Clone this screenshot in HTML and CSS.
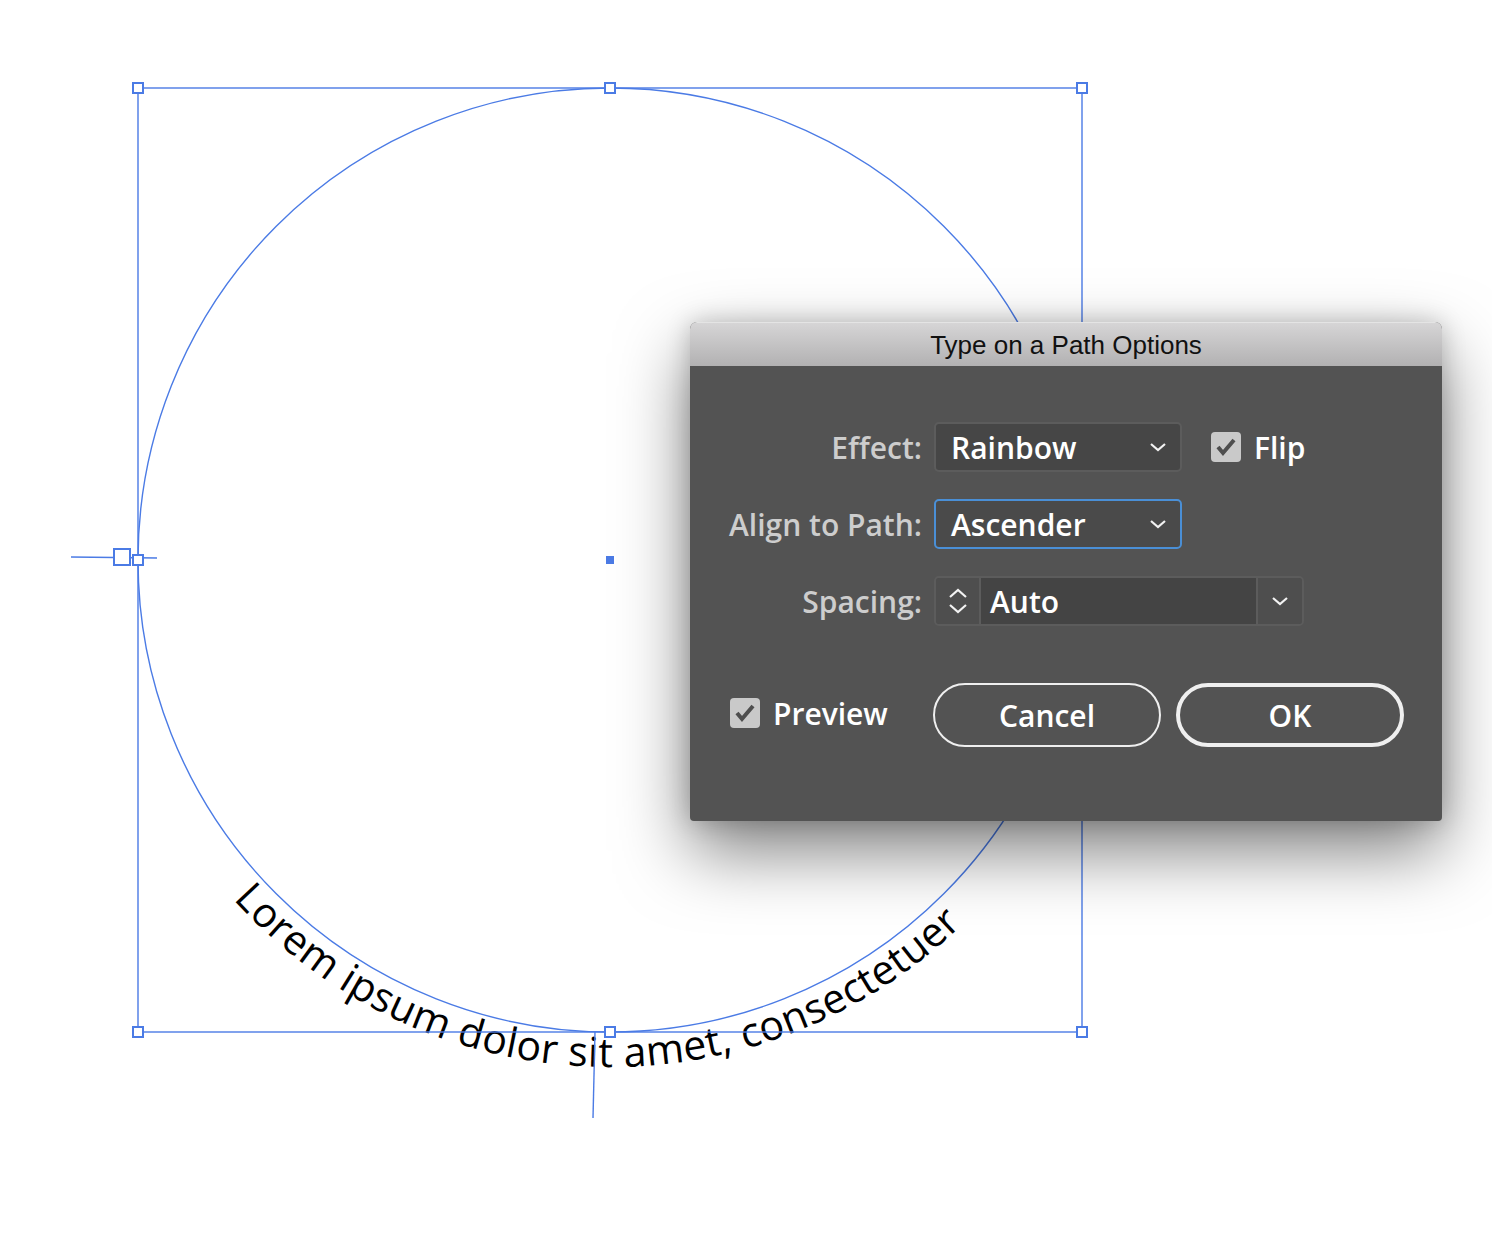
FILE: index.html
```html
<!DOCTYPE html>
<html lang="en">
<head>
    <meta charset="UTF-8">
    <title>Type on a Path Options</title>
    <link rel="stylesheet" href="styles.css">
</head>
<body>
    <div class="artboard">
        <svg class="art" width="1492" height="1252" viewBox="0 0 1492 1252">
            <defs>
                <path id="textArc" d="M 233.2 899.2 A 507 507 0 0 0 962.2 924.7"/>
            </defs>
            <text class="path-text"><textPath href="#textArc" textLength="814" lengthAdjust="spacing">Lorem ipsum dolor sit amet, consectetuer</textPath></text>
            <g class="guides">
                <rect x="138" y="88" width="944" height="944"/>
                <circle cx="610" cy="560" r="472"/>
                <line x1="71" y1="557" x2="157" y2="558"/>
                <line x1="595" y1="1032" x2="593" y2="1118"/>
            </g>
            <g class="handles">
                <rect x="133" y="83" width="10" height="10"/>
                <rect x="605" y="83" width="10" height="10"/>
                <rect x="1077" y="83" width="10" height="10"/>
                <rect x="133" y="1027" width="10" height="10"/>
                <rect x="605" y="1027" width="10" height="10"/>
                <rect x="1077" y="1027" width="10" height="10"/>
                <rect x="133" y="555" width="10" height="10"/>
                <rect x="1077" y="555" width="10" height="10"/>
                <rect x="114" y="549" width="16" height="16"/>
            </g>
            <rect class="center-point" x="606" y="556" width="8" height="8"/>
        </svg>

        <div class="dialog">
            <div class="dialog-title">Type on a Path Options</div>
            <div class="dialog-body">
                <div class="form">
                    <label class="field-label">Effect:</label>
                    <div class="field-row">
                        <div class="select">
                            <span>Rainbow</span>
                            <svg class="chevron" width="18" height="10" viewBox="0 0 18 10"><polyline points="2,2 9,8 16,2"/></svg>
                        </div>
                        <div class="check-item flip">
                            <span class="checkbox"><svg width="30" height="30" viewBox="0 0 30 30"><polyline points="7,15 12,21 23,8"/></svg></span>
                            <span>Flip</span>
                        </div>
                    </div>

                    <label class="field-label">Align to Path:</label>
                    <div class="field-row">
                        <div class="select focused">
                            <span>Ascender</span>
                            <svg class="chevron" width="18" height="10" viewBox="0 0 18 10"><polyline points="2,2 9,8 16,2"/></svg>
                        </div>
                    </div>

                    <label class="field-label">Spacing:</label>
                    <div class="field-row">
                        <div class="combo">
                            <div class="stepper">
                                <svg width="20" height="11" viewBox="0 0 20 11"><polyline points="2,9 10,2 18,9"/></svg>
                                <svg width="20" height="11" viewBox="0 0 20 11"><polyline points="2,2 10,9 18,2"/></svg>
                            </div>
                            <div class="combo-value">Auto</div>
                            <div class="combo-arrow">
                                <svg class="chevron" width="18" height="10" viewBox="0 0 18 10"><polyline points="2,2 9,8 16,2"/></svg>
                            </div>
                        </div>
                    </div>
                </div>

                <div class="footer">
                    <div class="check-item preview">
                        <span class="checkbox"><svg width="30" height="30" viewBox="0 0 30 30"><polyline points="7,15 12,21 23,8"/></svg></span>
                        <span>Preview</span>
                    </div>
                    <div class="buttons">
                        <button class="btn">Cancel</button>
                        <button class="btn default">OK</button>
                    </div>
                </div>
            </div>
        </div>
    </div>
</body>
</html>
```

FILE: styles.css
```css
body {
    margin: 0;
    background: #fff;
    font-family: 'Open Sans', 'Noto Sans', sans-serif;
}
.artboard {
    position: relative;
    width: 1492px;
    height: 1252px;
    overflow: hidden;
}
.art {
    display: block;
}
.guides {
    fill: none;
    stroke: #4b7be5;
    stroke-width: 1.4;
}
.handles rect {
    fill: #fff;
    stroke: #4b7be5;
    stroke-width: 2;
}
.center-point {
    fill: #4b7be5;
}
.path-text {
    font-family: 'Open Sans', 'Noto Sans', sans-serif;
    font-size: 41px;
    fill: #000;
}

/* dialog */
.dialog {
    position: absolute;
    left: 690px;
    top: 322px;
    width: 752px;
    background: #535353;
    border-radius: 7px 7px 4px 4px;
    box-shadow: 0 30px 70px rgba(0, 0, 0, 0.5), 0 0 24px rgba(0, 0, 0, 0.2);
    overflow: hidden;
}
.dialog-title {
    height: 44px;
    line-height: 45px;
    text-align: center;
    font-family: 'Liberation Sans', Arial, sans-serif;
    font-size: 26px;
    color: #111;
    background: linear-gradient(#d6d5d6, #b2b1b2);
    border-top: 1px solid #e4e4e4;
    box-sizing: border-box;
}
.dialog-body {
    padding: 56px 0 74px;
}
.form {
    display: grid;
    grid-template-columns: 232px 1fr;
    column-gap: 12px;
    row-gap: 27px;
    grid-auto-rows: 50px;
}
.field-label {
    display: flex;
    align-items: center;
    justify-content: flex-end;
    font-size: 30px;
    font-weight: 600;
    color: #cdcdcd;
}
.field-row {
    display: flex;
    align-items: center;
}
.select {
    width: 248px;
    height: 50px;
    box-sizing: border-box;
    display: flex;
    align-items: center;
    justify-content: space-between;
    padding: 0 13px 0 15px;
    background: #464646;
    border: 2px solid #5c5c5c;
    border-radius: 5px;
    font-size: 30px;
    font-weight: 600;
    color: #fff;
}
.select.focused {
    border-color: #4a8fd6;
    background: #4a4a4a;
}
.chevron polyline,
.stepper polyline {
    fill: none;
    stroke: #f2f2f2;
    stroke-width: 2.2;
}
.check-item {
    display: flex;
    align-items: center;
    gap: 13px;
    font-size: 30px;
    font-weight: 600;
    color: #fff;
}
.flip {
    margin-left: 29px;
}
.checkbox {
    width: 30px;
    height: 30px;
    border-radius: 4px;
    background: #c9c9c9;
    display: block;
}
.checkbox svg {
    display: block;
}
.checkbox polyline {
    fill: none;
    stroke: #4e4e4e;
    stroke-width: 4;
}
.combo {
    width: 370px;
    height: 50px;
    box-sizing: border-box;
    display: flex;
    border: 2px solid #5c5c5c;
    border-radius: 5px;
    overflow: hidden;
}
.stepper {
    width: 43px;
    display: flex;
    flex-direction: column;
    align-items: center;
    justify-content: center;
    gap: 4px;
    background: #4e4e4e;
    border-right: 2px solid #5c5c5c;
}
.stepper svg {
    display: block;
}
.combo-value {
    flex: 1;
    display: flex;
    align-items: center;
    padding-left: 9px;
    background: #444;
    font-size: 30px;
    font-weight: 600;
    color: #fff;
}
.combo-arrow {
    width: 44px;
    display: flex;
    align-items: center;
    justify-content: center;
    background: #4e4e4e;
    border-left: 2px solid #5c5c5c;
}
.footer {
    display: grid;
    grid-template-columns: 232px 1fr;
    column-gap: 11px;
    margin-top: 57px;
    align-items: center;
}
.preview {
    padding-left: 40px;
    margin-top: -4px;
}
.buttons {
    display: flex;
    gap: 15px;
}
.btn {
    width: 228px;
    height: 64px;
    box-sizing: border-box;
    border: 2px solid #efefef;
    border-radius: 32px;
    background: transparent;
    color: #fff;
    font-family: 'Open Sans', 'Noto Sans', sans-serif;
    font-size: 30px;
    font-weight: 600;
    padding: 0;
}
.btn.default {
    border-width: 4px;
}
```
